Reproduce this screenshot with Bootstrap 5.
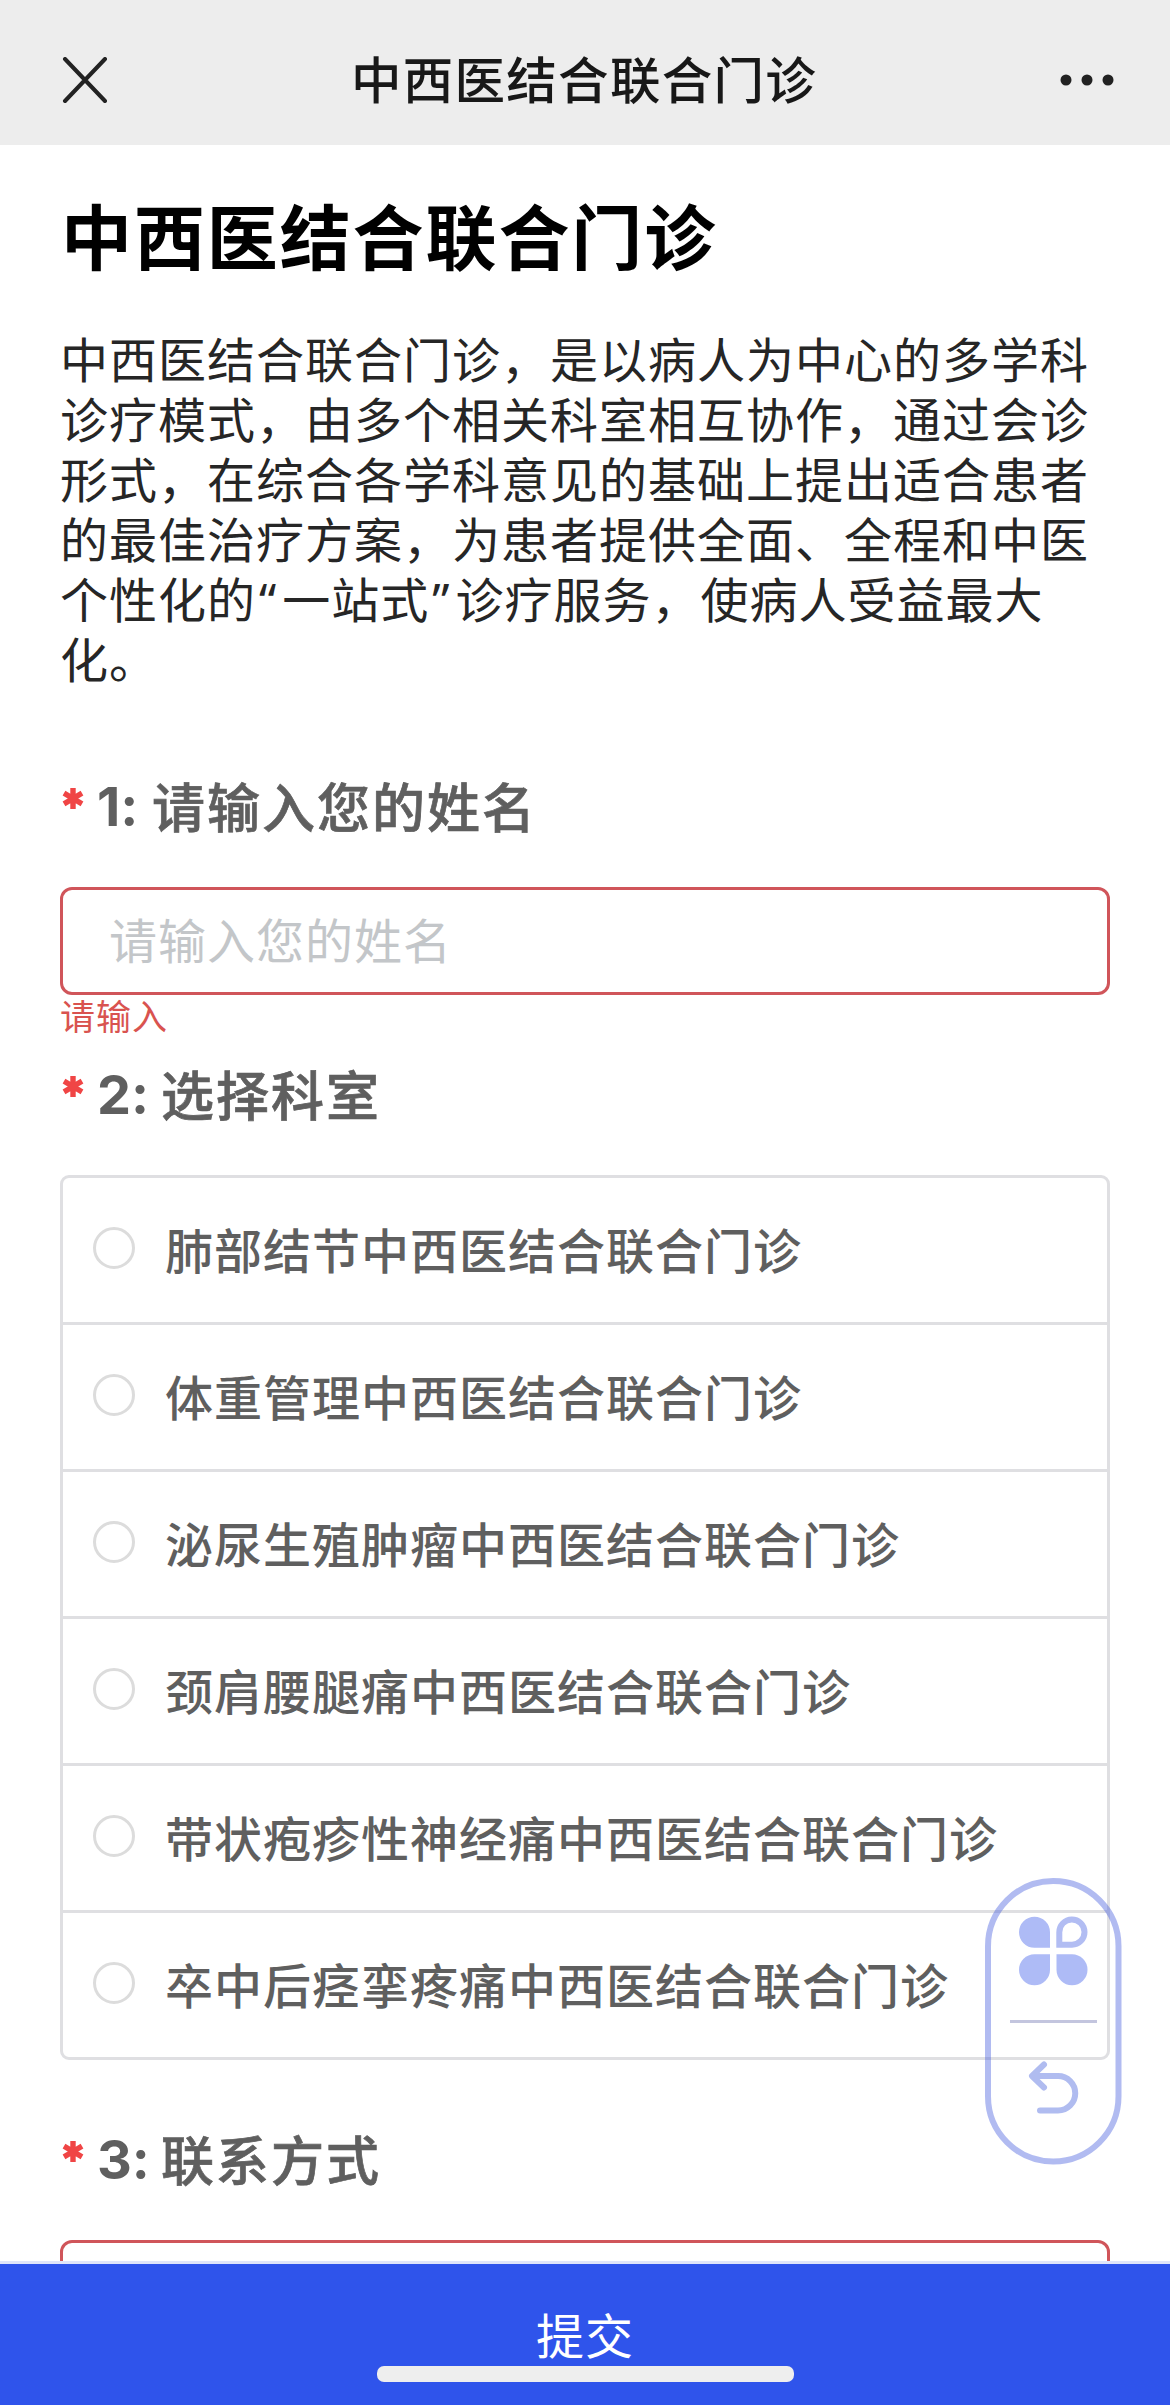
<!DOCTYPE html>
<html lang="zh-CN">
<head>
<meta charset="utf-8">
<meta name="viewport" content="width=device-width, initial-scale=1">
<title>中西医结合联合门诊</title>
<link rel="stylesheet" href="https://cdn.jsdelivr.net/npm/bootstrap@5.3.0/dist/css/bootstrap.min.css">
<style>
body{font-family:"Noto Sans CJK SC",sans-serif;color:#262626;background:#fff}
.screen{width:1170px;height:2405px;overflow:hidden}
.topbar{height:145px;background:#ededed;padding:14px 56px 0 62px}
.topbar-title{font-size:50.5px;letter-spacing:1.3px;font-weight:500;color:#181818;line-height:72px;padding-bottom:6px}
.content{padding:0 60px}
.page-title{font-size:71px;letter-spacing:1.9px;font-weight:700;color:#000;line-height:100px;margin:38px 0 0;padding-left:1px}
.intro{font-size:48px;letter-spacing:1px;line-height:60px;height:360px;margin:44px 0 0}
.quo{font-family:"Noto Sans",sans-serif;letter-spacing:6px;line-height:1;padding-left:3px}
.q-label{font-size:53px;font-weight:500;color:#5f5f5f;line-height:80px;margin-bottom:40px}
#q1{margin-top:80px}
#q2{margin-top:20px}
#q3{margin-top:60px}
.q-text{letter-spacing:2px;margin-top:-2px;height:80px;-webkit-text-stroke:.7px #5f5f5f}
.q-num{font-family:Inter,sans-serif;font-feature-settings:"calt" 0;font-weight:700;font-size:54px;width:55px;margin-left:-1px;white-space:nowrap}
.q-num.wide{width:64px}
.star{width:38px;height:80px;flex:none}
.field.form-control{height:108px;border:3px solid #d0555a;border-radius:12px;padding:0 46px 6px;font-size:48px;letter-spacing:1px;color:#262626}
.field.form-control::placeholder{color:#c3c6c9;opacity:1}
.err{font-size:35px;letter-spacing:1px;line-height:44px;height:42px;margin-top:-2px;color:#d9534f}
.choices{border:3px solid #dfdfe2;border-radius:9px}
.choice{height:147px;border-bottom:3px solid #dfdfe2;padding:0 0 0 30px;font-size:48px;letter-spacing:1px;font-weight:500;color:#5f5f5f}
.choice:last-child{border-bottom:0;height:144px}
.choice .form-check-input{width:42px;height:42px;border:3px solid #dcdcdc;margin:0 30px 5px 0;flex:none}
.choice span{line-height:60px;padding-bottom:4px}
.submit{height:144px;background:#2f54eb;border-top:3px solid #dfe5fa;color:#fff;font-size:48px;letter-spacing:1px;width:1170px}
.submit-text{line-height:60px;padding-top:39px}
.home-bar{width:417px;height:16px;border-radius:7px;background:#eee;margin-top:3px}
.floater{left:985px;top:1878px;width:137px;height:287px}
</style>
</head>
<body>
<div class="screen position-relative d-flex flex-column">
  <header class="topbar d-flex align-items-center justify-content-between flex-shrink-0">
    <svg width="46" height="46" viewBox="0 0 46 46" fill="none" stroke="#222" stroke-width="4" stroke-linecap="round"><path d="M3 2L43 44M43 2L3 44"/></svg>
    <div class="topbar-title">中西医结合联合门诊</div>
    <svg width="54" height="14" viewBox="0 0 54 14" fill="#222"><circle cx="6" cy="7" r="5.5"/><circle cx="27" cy="7" r="5.5"/><circle cx="48" cy="7" r="5.5"/></svg>
  </header>

  <main class="content flex-grow-1 overflow-hidden">
    <h1 class="page-title">中西医结合联合门诊</h1>
    <p class="intro">中西医结合联合门诊，是以病人为中心的多学科诊疗模式，由多个相关科室相互协作，通过会诊形式，在综合各学科意见的基础上提出适合患者的最佳治疗方案，为患者提供全面、全程和中医个性化的<span class="quo">“</span>一站式<span class="quo">”</span>诊疗服务，使病人受益最大化。</p>

    <div class="q-label d-flex" id="q1">
      <svg class="star" viewBox="0 0 38 80" stroke="#f04545" stroke-width="5.4"><path d="M13 21v21M4 26.200l18 10.600M22 26.200L4 36.800"/></svg>
      <span class="q-num">1:</span><span class="q-text">请输入您的姓名</span>
    </div>
    <input class="field form-control" type="text" placeholder="请输入您的姓名">
    <div class="err">请输入</div>

    <div class="q-label d-flex" id="q2">
      <svg class="star" viewBox="0 0 38 80" stroke="#f04545" stroke-width="5.4"><path d="M13 21v21M4 26.200l18 10.600M22 26.200L4 36.800"/></svg>
      <span class="q-num wide">2:</span><span class="q-text">选择科室</span>
    </div>
    <div class="choices">
      <label class="choice d-flex align-items-center"><input class="form-check-input" type="radio" name="dept"><span>肺部结节中西医结合联合门诊</span></label>
      <label class="choice d-flex align-items-center"><input class="form-check-input" type="radio" name="dept"><span>体重管理中西医结合联合门诊</span></label>
      <label class="choice d-flex align-items-center"><input class="form-check-input" type="radio" name="dept"><span>泌尿生殖肿瘤中西医结合联合门诊</span></label>
      <label class="choice d-flex align-items-center"><input class="form-check-input" type="radio" name="dept"><span>颈肩腰腿痛中西医结合联合门诊</span></label>
      <label class="choice d-flex align-items-center"><input class="form-check-input" type="radio" name="dept"><span>带状疱疹性神经痛中西医结合联合门诊</span></label>
      <label class="choice d-flex align-items-center"><input class="form-check-input" type="radio" name="dept"><span>卒中后痉挛疼痛中西医结合联合门诊</span></label>
    </div>

    <div class="q-label d-flex" id="q3">
      <svg class="star" viewBox="0 0 38 80" stroke="#f04545" stroke-width="5.4"><path d="M13 21v21M4 26.200l18 10.600M22 26.200L4 36.800"/></svg>
      <span class="q-num wide">3:</span><span class="q-text">联系方式</span>
    </div>
    <input class="field form-control" type="text">
  </main>

  <footer class="submit flex-shrink-0 d-flex flex-column align-items-center">
    <div class="submit-text">提交</div>
    <div class="home-bar"></div>
  </footer>

  <svg class="floater position-absolute" viewBox="0 0 137 287" fill="none">
    <rect x="3" y="3" width="130.5" height="280.5" rx="65.2" stroke="#3b55dc" stroke-opacity=".4" stroke-width="6"/>
    <g fill="#aebbf6">
      <path d="M49.500 38.700A15.500 15.500 0 0 0 49.500 69.700H65V54.200A15.500 15.500 0 0 0 49.500 38.700Z"/>
      <path d="M49.500 76.200A15.500 15.500 0 1 0 65 91.700V76.200Z"/>
      <path d="M71.500 76.200V91.700A15.500 15.500 0 1 0 87 76.200Z"/>
    </g>
    <path d="M74.300 66.700V54.200A12.600 12.600 0 1 1 87 66.700Z" stroke="#b2bdf3" stroke-width="6"/>
    <path d="M25 143.500H112" stroke="#c3c5de" stroke-width="3"/>
    <g stroke="#b0bcf0" stroke-width="6" stroke-linecap="round" stroke-linejoin="round"><path d="M59 186.500L47 198L59 209.500"/><path d="M49 198H73A17 17 0 0 1 73 232.500H55"/></g>
  </svg>
</div>
<script src="https://cdn.jsdelivr.net/npm/bootstrap@5.3.0/dist/js/bootstrap.bundle.min.js"></script>
</body>
</html>
